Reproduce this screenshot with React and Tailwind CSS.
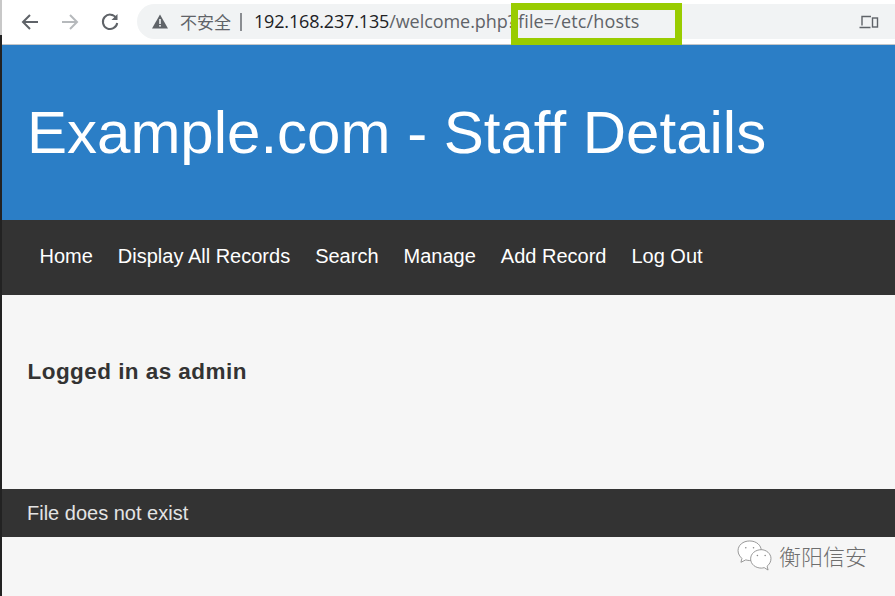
import React from "react";

const sans = { fontFamily: '"Liberation Sans", Arial, sans-serif' };

function Arrow({ color, flip }) {
  return (
    <svg width="20" height="20" viewBox="0 0 20 20" fill="none" stroke={color} strokeWidth="2" style={flip ? { transform: "scaleX(-1)" } : undefined}>
      <path d="M18 10H3M10 3l-7 7 7 7" />
    </svg>
  );
}

export default function App() {
  return (
    <div className="relative flex h-[596px] w-[895px] overflow-hidden bg-[#f6f6f6]" style={sans}>
      <div className="flex w-[2px] shrink-0 flex-col">
        <div className="h-[35px] bg-[#c8c8c8]" />
        <div className="flex-1 bg-[#222222]" />
      </div>
      <div className="flex min-w-0 flex-1 flex-col">
        <div className="flex h-[45px] shrink-0 items-start border-b border-[#c4c6c8] bg-white">
          <div className="flex h-[39px] w-[135px] shrink-0 items-center pl-[18px] pt-[4px]">
            <Arrow color="#5f6368" />
            <div className="ml-[20px]"><Arrow color="#b6b9bc" flip /></div>
            <svg className="ml-[20px]" width="20" height="20" viewBox="0 0 20 20" fill="none" stroke="#5f6368" strokeWidth="2">
              <path d="M16.2 6A7.2 7.2 0 1 0 17.2 11" />
              <path d="M17.5 2v6h-6" fill="#5f6368" stroke="none" />
            </svg>
          </div>
          <div className="mt-[4px] flex h-[35px] flex-1 items-center rounded-l-full bg-[#f1f3f4] pl-[15px] text-[18px] text-[#5f6368]">
            <svg width="16" height="15" viewBox="0 0 16 15" className="shrink-0">
              <path d="M8 0.5L16 14.5H0Z" fill="#5f6368" />
              <rect x="7.2" y="5" width="1.6" height="5" fill="#f1f3f4" />
              <rect x="7.2" y="11" width="1.6" height="1.6" fill="#f1f3f4" />
            </svg>
            <span className="ml-[12px] whitespace-nowrap text-[17px]" style={{ fontFamily: '"Noto Sans CJK SC", sans-serif' }}>不安全</span>
            <span className="ml-[9px] h-[18px] w-[2px] bg-[#8a8d91]" />
            <span className="ml-[12px] whitespace-nowrap tracking-[-0.17px]" style={{ fontFamily: '"Open Sans", sans-serif' }}>
              <span className="text-[#202124]">192.168.237.135</span>
              <span className="tracking-[-0.05px]">/welcome.php?</span>
              <span className="ml-[2.5px] tracking-[0.15px]">file=/etc/hosts</span>
            </span>
            <svg className="ml-auto mr-[16px] shrink-0" width="20" height="14" viewBox="0 0 20 14" fill="none" stroke="#5f6368" strokeWidth="1.4">
              <path d="M12 1.5H3v9M0.5 12.5h11" />
              <rect x="13.5" y="3" width="5" height="9" />
            </svg>
          </div>
        </div>

        <header className="flex h-[175px] shrink-0 items-center bg-[#2b7ec6] pl-[25px] text-[60px] leading-none text-white">
          Example.com - Staff Details
        </header>

        <nav className="flex h-[75px] shrink-0 items-center gap-[25px] bg-[#333333] pb-[4px] pl-[37.5px] text-[20px] text-white">
          <a>Home</a>
          <a>Display All Records</a>
          <a>Search</a>
          <a>Manage</a>
          <a>Add Record</a>
          <a>Log Out</a>
        </nav>

        <main className="h-[194px] shrink-0 pl-[25.5px] pt-[63px]">
          <h3 className="text-[22.5px] font-bold leading-[28px] tracking-[0.45px] text-[#333333]">Logged in as admin</h3>
        </main>

        <footer className="flex h-[48px] shrink-0 items-center bg-[#333333] pl-[25px] text-[20px] text-[#e4e4e4]">
          File does not exist
        </footer>

        <div className="flex flex-1 items-start justify-end pr-[28px] pt-[2px]">
          <div className="flex items-center gap-[7px]">
            <svg width="35" height="31" viewBox="0 0 36 32" fill="#ffffff" stroke="#8a8a8a" strokeWidth="0.9">
              <path d="M13 1C6 1 1 5.500 1 11c0 3.500 2 6 4 8l-1 4 5-2.500c1.500.5 3 .7 4 .7C20 21 25 16 25 11 25 5.500 20 1 13 1Z" />
              <path d="M25 10c-6 0-11 4-11 9.500S19 29 25 29c1 0 2-.2 3-.5l4 2.500-1-4c2.500-2 4-4.500 4-8C35 14 30 10 25 10Z" />
              <circle cx="9" cy="8" r="0.8" fill="#8a8a8a" stroke="none" />
              <circle cx="17" cy="8" r="0.8" fill="#8a8a8a" stroke="none" />
              <circle cx="21" cy="16" r="0.8" fill="#8a8a8a" stroke="none" />
              <circle cx="29" cy="16" r="0.8" fill="#8a8a8a" stroke="none" />
            </svg>
            <span className="text-[22px] leading-[32px] text-[#6e6e6e]" style={{ fontFamily: '"Noto Sans CJK SC", sans-serif', fontWeight: 300 }}>衡阳信安</span>
          </div>
        </div>
      </div>

      <div className="absolute left-[511px] top-[3px] h-[42px] w-[171px] border-[7px] border-[#99cc00]" />
    </div>
  );
}
